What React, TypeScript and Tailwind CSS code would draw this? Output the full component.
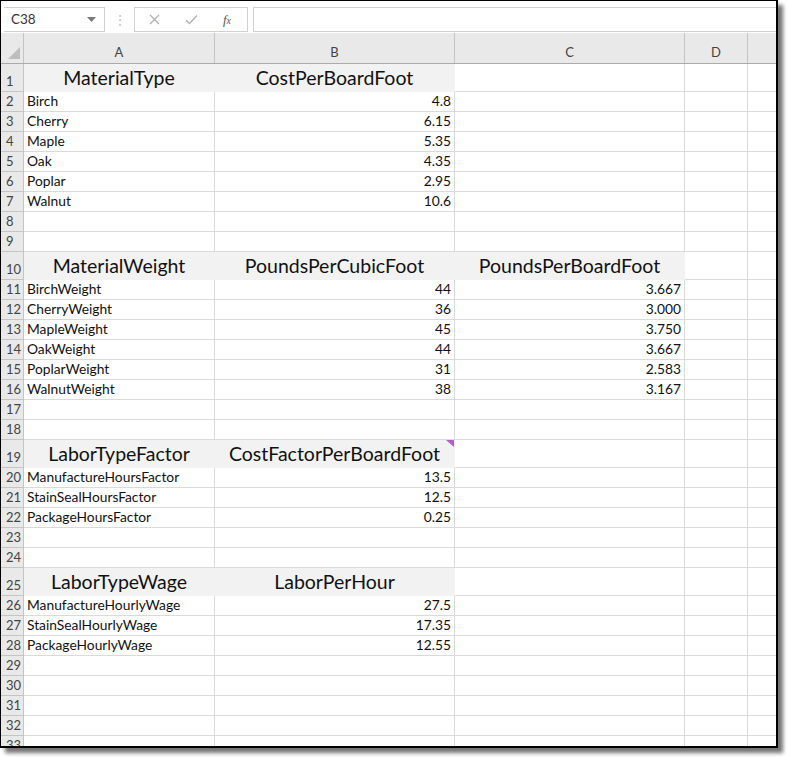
import React from 'react';

type Row = {
  n: number;
  tall?: boolean;
  cells?: [string, string, string];
  fill?: number; // how many of A..C are filled
  note?: boolean;
};

const rows: Row[] = [
  { n: 1, tall: true, cells: ['MaterialType', 'CostPerBoardFoot', ''], fill: 2 },
  { n: 2, cells: ['Birch', '4.8', ''] },
  { n: 3, cells: ['Cherry', '6.15', ''] },
  { n: 4, cells: ['Maple', '5.35', ''] },
  { n: 5, cells: ['Oak', '4.35', ''] },
  { n: 6, cells: ['Poplar', '2.95', ''] },
  { n: 7, cells: ['Walnut', '10.6', ''] },
  { n: 8 },
  { n: 9 },
  { n: 10, tall: true, cells: ['MaterialWeight', 'PoundsPerCubicFoot', 'PoundsPerBoardFoot'], fill: 3 },
  { n: 11, cells: ['BirchWeight', '44', '3.667'] },
  { n: 12, cells: ['CherryWeight', '36', '3.000'] },
  { n: 13, cells: ['MapleWeight', '45', '3.750'] },
  { n: 14, cells: ['OakWeight', '44', '3.667'] },
  { n: 15, cells: ['PoplarWeight', '31', '2.583'] },
  { n: 16, cells: ['WalnutWeight', '38', '3.167'] },
  { n: 17 },
  { n: 18 },
  { n: 19, tall: true, cells: ['LaborTypeFactor', 'CostFactorPerBoardFoot', ''], fill: 2, note: true },
  { n: 20, cells: ['ManufactureHoursFactor', '13.5', ''] },
  { n: 21, cells: ['StainSealHoursFactor', '12.5', ''] },
  { n: 22, cells: ['PackageHoursFactor', '0.25', ''] },
  { n: 23 },
  { n: 24 },
  { n: 25, tall: true, cells: ['LaborTypeWage', 'LaborPerHour', ''], fill: 2 },
  { n: 26, cells: ['ManufactureHourlyWage', '27.5', ''] },
  { n: 27, cells: ['StainSealHourlyWage', '17.35', ''] },
  { n: 28, cells: ['PackageHourlyWage', '12.55', ''] },
  { n: 29 },
  { n: 30 },
  { n: 31 },
  { n: 32 },
  { n: 33 },
];

const widths = ['w-[191px]', 'w-[240px]', 'w-[230px]'];

function FormulaBar() {
  return (
    <div className="flex items-end h-[32px] bg-white pb-[1px] shrink-0">
      <div className="ml-[3px] w-[101px] h-[25px] border border-[#d0d0d0] border-l-0 flex items-center justify-between pl-[7px] pr-[8px]">
        <span className="text-[13.5px] text-[#333]">C38</span>
        <svg width="9" height="5" viewBox="0 0 9 5">
          <path d="M0 0 L9 0 L4.5 5 Z" fill="#7a7a7a" />
        </svg>
      </div>
      <div className="w-[29px] h-[25px] flex items-center justify-center text-[#c4c4c4] text-[14px]">⋮</div>
      <div className="w-[114px] h-[25px] border border-[#d0d0d0] flex items-center">
        <div className="w-[38px] flex justify-center">
          <svg width="11" height="11" viewBox="0 0 11 11">
            <path d="M1 1 L10 10 M10 1 L1 10" stroke="#b0b0b0" strokeWidth="1.3" />
          </svg>
        </div>
        <div className="w-[36px] flex justify-center">
          <svg width="13" height="11" viewBox="0 0 13 11">
            <path d="M1 6 L4.5 9.5 L12 1.5" stroke="#b0b0b0" strokeWidth="1.4" fill="none" />
          </svg>
        </div>
        <div className="w-[36px] flex justify-center">
          <span className="text-[13px] italic text-[#555] font-['Liberation_Serif',serif]">
            f<span className="text-[10px]">x</span>
          </span>
        </div>
      </div>
      <div className="ml-[5px] flex-1 h-[25px] border border-[#d0d0d0] border-r-0" />
    </div>
  );
}

function ColumnHeader() {
  const cols = [
    { l: 'A', w: 'w-[191px]' },
    { l: 'B', w: 'w-[240px]' },
    { l: 'C', w: 'w-[230px]' },
    { l: 'D', w: 'w-[63px]' },
  ];
  return (
    <div className="flex h-[31px] bg-[#e9e9e9] border-b border-[#ababab] shrink-0">
      <div className="w-[23px] relative border-r border-[#c4c4c4]">
        <svg className="absolute right-[3px] bottom-[4px]" width="12" height="12" viewBox="0 0 12 12">
          <path d="M12 0 L12 12 L0 12 Z" fill="#bdbdbd" />
        </svg>
      </div>
      {cols.map((c) => (
        <div
          key={c.l}
          className={`${c.w} border-r border-[#c4c4c4] flex items-end justify-center pb-[1px] text-[13px] text-[#444]`}
        >
          {c.l}
        </div>
      ))}
      <div className="flex-1" />
    </div>
  );
}

function SheetRow({ row }: { row: Row }) {
  const h = row.tall ? 'h-[28px]' : 'h-[20px]';
  const fill = row.fill ?? 0;
  return (
    <div className={`flex ${h} shrink-0`}>
      <div className="w-[23px] bg-[#e9e9e9] border-r border-b border-[#c4c4c4] flex items-end pl-[5px] pb-[1px] text-[13px] leading-[18px] text-[#444]">
        {row.n}
      </div>
      {widths.map((w, i) => {
        const text = row.cells ? row.cells[i] : '';
        const filled = i < fill;
        if (row.tall) {
          return (
            <div
              key={i}
              className={`${w} relative flex items-end justify-center pb-[0px] text-[19.5px] leading-[26px] text-[#111] ${
                filled
                  ? 'bg-[#f2f2f2] border-r border-b border-[#f2f2f2]'
                  : 'border-r border-b border-[#dadada]'
              }`}
            >
              {text}
              {row.note && i === 1 && (
                <svg className="absolute right-0 top-0" width="8" height="7" viewBox="0 0 8 7">
                  <path d="M0 0 L8 0 L8 7 Z" fill="#b45cc9" />
                </svg>
              )}
            </div>
          );
        }
        return (
          <div
            key={i}
            className={`${w} border-r border-b border-[#dadada] flex items-end px-[3px] pb-[1px] text-[13.8px] leading-[18px] text-[#111] ${
              i === 0 ? 'justify-start' : 'justify-end'
            }`}
          >
            {text}
          </div>
        );
      })}
      <div className="w-[63px] border-r border-b border-[#dadada]" />
      <div className="flex-1 border-b border-[#dadada]" />
    </div>
  );
}

export default function App() {
  return (
    <div className="w-[787px] h-[757px] bg-white font-['Lato',sans-serif]">
      <div className="w-[778px] h-[748px] border-t border-l border-r-2 border-b-2 border-black shadow-[5px_5px_4px_rgba(0,0,0,0.55)] overflow-hidden flex flex-col bg-white">
        <FormulaBar />
        <ColumnHeader />
        {rows.map((r) => (
          <SheetRow key={r.n} row={r} />
        ))}
      </div>
    </div>
  );
}
